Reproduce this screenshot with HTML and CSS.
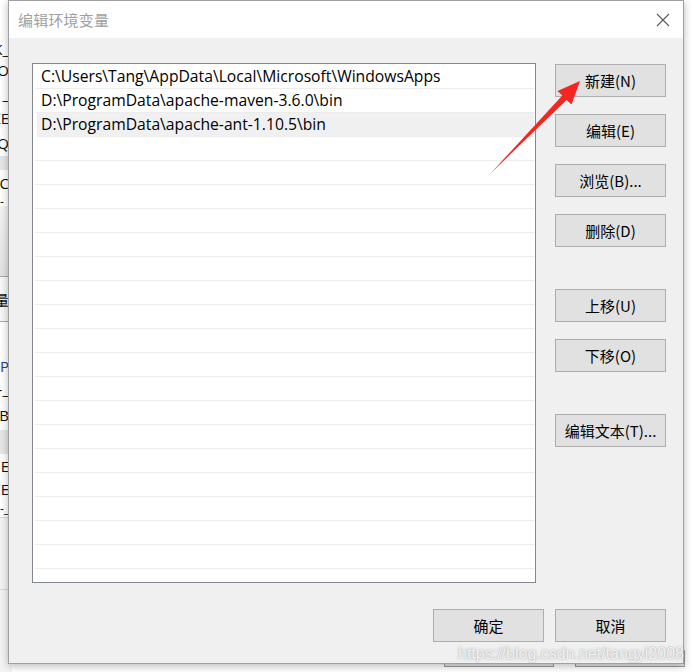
FILE: index.html
```html
<!DOCTYPE html>
<html lang="zh-CN">
<head>
<meta charset="utf-8">
<title>编辑环境变量</title>
<link rel="stylesheet" href="styles.css">
</head>
<body>
<div class="desk">
  <div class="bgwin">
    <div class="bg-row h40"></div>
    <div class="bg-row h18"><span>CK_</span></div>
    <div class="bg-row h24"><span>IO</span></div>
    <div class="bg-row h24"><span>_</span></div>
    <div class="bg-row h24"><span>XE</span></div>
    <div class="bg-row h26"><span>Q</span></div>
    <div class="bg-row h14 gray"></div>
    <div class="bg-row h26"><span>TC</span></div>
    <div class="bg-row h10 small"><span>-_</span></div>
    <div class="bg-row h71 grad"></div>
    <div class="bg-row h45 lgray"><span>量</span></div>
    <div class="bg-row h32"></div>
    <div class="bg-row h24 blue"><span>IP</span></div>
    <div class="bg-row h22"><span>-_</span></div>
    <div class="bg-row h30"><span>B</span></div>
    <div class="bg-row h24 gray"></div>
    <div class="bg-row h24"><span>HE</span></div>
    <div class="bg-row h22"><span>CE</span></div>
    <div class="bg-row h17 small"><span>-_</span></div>
    <div class="bg-row h72 lgray2"></div>
    <div class="bg-row rest lgray2"></div>
  </div>
  <div class="bgbtns">
    <span class="bgbtn"></span>
    <span class="bgbtn"></span>
  </div>

  <div class="dialog">
    <div class="titlebar">
      <span class="title">编辑环境变量</span>
      <svg class="close" width="14" height="14" viewBox="0 0 14 14"><path d="M1 1 L13 13 M13 1 L1 13" stroke="#5a5a5a" stroke-width="1.1" fill="none"/></svg>
    </div>
    <div class="content">
      <div class="main">
        <div class="list">
          <div class="row">C:\Users\Tang\AppData\Local\Microsoft\WindowsApps</div>
          <div class="row">D:\ProgramData\apache-maven-3.6.0\bin</div>
          <div class="row hover">D:\ProgramData\apache-ant-1.10.5\bin</div>
          <div class="row"></div><div class="row"></div><div class="row"></div>
          <div class="row"></div><div class="row"></div><div class="row"></div>
          <div class="row"></div><div class="row"></div><div class="row"></div>
          <div class="row"></div><div class="row"></div><div class="row"></div>
          <div class="row"></div><div class="row"></div><div class="row"></div>
          <div class="row"></div><div class="row"></div><div class="row"></div>
          <div class="row"></div>
        </div>
        <div class="side">
          <div class="grp">
            <button class="btn">新建(N)</button>
            <button class="btn">编辑(E)</button>
            <button class="btn">浏览(B)...</button>
            <button class="btn">删除(D)</button>
          </div>
          <div class="grp">
            <button class="btn">上移(U)</button>
            <button class="btn">下移(O)</button>
          </div>
          <div class="grp">
            <button class="btn">编辑文本(T)...</button>
          </div>
        </div>
      </div>
      <div class="footer">
        <button class="btn">确定</button>
        <button class="btn">取消</button>
      </div>
    </div>
  </div>

  <svg class="arrow" width="693" height="672" viewBox="0 0 693 672">
    <polygon points="580,81 571.5,104.5 566.6,100 490.5,173.5 562.3,95.6 557.5,91" fill="#f4261f"/>
  </svg>

  <div class="watermark">https://blog.csdn.net/tangyi2008</div>
</div>
</body>
</html>
```
FILE: styles.css
```css
* { box-sizing: border-box; }
html, body { margin: 0; padding: 0; }
body {
  width: 693px;
  height: 672px;
  overflow: hidden;
  background: #ffffff;
  font-family: "Noto Sans CJK SC", "Noto Sans", sans-serif;
}
.desk {
  position: relative;
  width: 693px;
  height: 672px;
  background: #ffffff;
}

/* background window peeking at left */
.bgwin {
  position: absolute;
  left: 0;
  top: 0;
  width: 12px;
  height: 672px;
  display: flex;
  flex-direction: column;
  background: #ffffff;
}
.bg-row {
  display: flex;
  justify-content: flex-end;
  align-items: center;
  overflow: hidden;
  white-space: nowrap;
  font-family: "Open Sans", "Noto Sans CJK SC", sans-serif;
  font-size: 15px;
  color: #111;
  padding-right: 3px;
  flex: none;
}
.bg-row.small { font-size: 12px; }
.bg-row.blue { color: #1a3e8a; }
.bg-row.gray { background: #e6e6e6; }
.bg-row.grad { background: linear-gradient(#f3f3f3, #e2e2e2); border-bottom: 1px solid #a8a8a8; }
.bg-row.lgray { background: #f7f7f7; border-bottom: 1px solid #a8a8a8; }
.bg-row.lgray2 { background: #f4f4f4; border-top: 1px solid #d8d8d8; }
.h10 { height: 10px; } .h14 { height: 14px; } .h17 { height: 17px; } .h18 { height: 18px; }
.h22 { height: 22px; } .h24 { height: 24px; } .h26 { height: 26px; } .h30 { height: 30px; }
.h32 { height: 32px; } .h40 { height: 40px; } .h45 { height: 45px; } .h71 { height: 71px; }
.h72 { height: 72px; }
.rest { flex: 1; }

.bgbtns {
  position: absolute;
  left: 444px;
  top: 650px;
  display: flex;
  gap: 21px;
}
.bgbtn {
  display: block;
  width: 110px;
  height: 17px;
  border: 1px solid #9a9a9a;
  background: #e6e6e6;
}

/* dialog */
.dialog {
  position: absolute;
  left: 8px;
  top: 0;
  width: 676px;
  height: 664px;
  border: 1px solid #a0a0a0;
  background: #f0f0f0;
  box-shadow: 0 2px 8px rgba(0, 0, 0, 0.28);
  display: flex;
  flex-direction: column;
}
.titlebar {
  height: 37px;
  flex: none;
  background: #ffffff;
  display: flex;
  align-items: center;
  justify-content: space-between;
  padding: 0 13px 0 9px;
}
.title {
  font-size: 15px;
  color: #a0a0a0;
  letter-spacing: 0.2px;
}
.close { display: block; }

.content {
  flex: 1;
  display: flex;
  flex-direction: column;
  padding: 25px 17px 21px 23px;
}
.main {
  display: flex;
  gap: 19px;
  height: 520px;
}
.list {
  width: 504px;
  height: 520px;
  background: #ffffff;
  border: 1px solid #828790;
  padding: 1px 1px 0 1px;
  overflow: hidden;
}
.row {
  height: 24px;
  border-bottom: 1px solid #ececec;
  margin-left: 1px;
  padding-left: 6px;
  font-family: "Open Sans", "Noto Sans CJK SC", sans-serif;
  font-size: 15.7px;
  line-height: 23px;
  color: #000;
  white-space: nowrap;
}
.row.hover { background: #f0f0f0; margin-left: 3px; padding-left: 4px; }

.side {
  display: flex;
  flex-direction: column;
  gap: 42px;
  padding-top: 1px;
}
.grp {
  display: flex;
  flex-direction: column;
  gap: 17px;
}
.btn {
  width: 111px;
  height: 33px;
  background: #e1e1e1;
  border: 1px solid #adadad;
  font-family: "Noto Sans CJK SC", "Noto Sans", sans-serif;
  font-size: 15px;
  color: #000;
  padding: 0;
  margin: 0;
  line-height: 31px;
  text-align: center;
}

.footer {
  margin-top: 26px;
  display: flex;
  justify-content: flex-end;
  gap: 11px;
}

.arrow {
  position: absolute;
  left: 0;
  top: 0;
  pointer-events: none;
}

.watermark {
  position: absolute;
  left: 458px;
  top: 644px;
  font-family: "Liberation Sans", Arial, sans-serif;
  font-size: 16px;
  line-height: 20px;
  color: rgba(255, 255, 255, 0.9);
  text-shadow: 0 0 1px rgba(140, 140, 140, 0.8), 0 0 3px rgba(170, 170, 170, 0.6);
  white-space: nowrap;
}
```
